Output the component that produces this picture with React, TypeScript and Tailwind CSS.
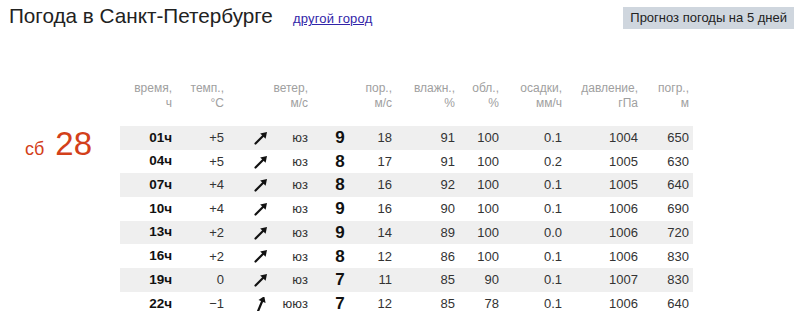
const columns = [
  { w: "w-[52px]", head: ["время,", "ч"] },
  { w: "w-[52px]", head: ["темп.,", "°C"] },
  { w: "w-[46px]", head: ["", ""] },
  { w: "w-[38px]", head: ["ветер,", "м/с"] },
  { w: "w-[64px]", head: ["", ""] },
  { w: "w-[20px]", head: ["пор.,", "м/с"] },
  { w: "w-[63px]", head: ["влажн.,", "%"] },
  { w: "w-[44px]", head: ["обл.,", "%"] },
  { w: "w-[63px]", head: ["осадки,", "мм/ч"] },
  { w: "w-[76px]", head: ["давление,", "гПа"] },
  { w: "w-[51px]", head: ["погр.,", "м"] },
];

const rows = [
  { time: "01ч", temp: "+5", dir: "юз", rot: 0, speed: "9", gust: "18", hum: "91", cloud: "100", rain: "0.1", press: "1004", err: "650" },
  { time: "04ч", temp: "+5", dir: "юз", rot: 0, speed: "8", gust: "17", hum: "91", cloud: "100", rain: "0.2", press: "1005", err: "630" },
  { time: "07ч", temp: "+4", dir: "юз", rot: 0, speed: "8", gust: "16", hum: "92", cloud: "100", rain: "0.1", press: "1005", err: "640" },
  { time: "10ч", temp: "+4", dir: "юз", rot: 0, speed: "9", gust: "16", hum: "90", cloud: "100", rain: "0.1", press: "1006", err: "690" },
  { time: "13ч", temp: "+2", dir: "юз", rot: 0, speed: "9", gust: "14", hum: "89", cloud: "100", rain: "0.0", press: "1006", err: "720" },
  { time: "16ч", temp: "+2", dir: "юз", rot: 0, speed: "8", gust: "12", hum: "86", cloud: "100", rain: "0.1", press: "1006", err: "830" },
  { time: "19ч", temp: "0", dir: "юз", rot: 0, speed: "7", gust: "11", hum: "85", cloud: "90", rain: "0.1", press: "1007", err: "830" },
  { time: "22ч", temp: "−1", dir: "ююз", rot: -22.5, speed: "7", gust: "12", hum: "85", cloud: "78", rain: "0.1", press: "1006", err: "640" },
];

function WindArrow({ rot }: { rot: number }) {
  return (
    <svg width="14" height="14" viewBox="0 0 14 14">
      <g transform={`rotate(${rot} 7 7)`}>
        <line x1="1.5" y1="12.5" x2="9.5" y2="4.5" stroke="#111" strokeWidth="2.2" strokeLinecap="round" />
        <polygon points="13,1 6.2,2.4 11.6,7.8" fill="#111" />
      </g>
    </svg>
  );
}

export default function App() {
  return (
    <div className="w-[800px] h-[316px] overflow-hidden bg-white font-['Liberation_Sans',Arial,sans-serif] text-[#333]">
      <div className="flex items-start h-[32px] pt-[4px] pl-[9px] pr-[6px]">
        <div className="flex items-baseline">
          <h1 className="text-[20.7px] leading-[24px] text-[#222]">Погода в Санкт-Петербурге</h1>
          <a href="#" className="ml-[20px] text-[13px] tracking-[0.2px] text-[#3124a8] underline">
            другой город
          </a>
        </div>
        <div className="ml-auto mt-[3px] bg-[#cfd6de] px-[7px] text-[13px] leading-[22px] text-[#222]">
          Прогноз погоды на 5 дней
        </div>
      </div>

      <div className="mt-[49px] flex">
        <div className="w-[120px] shrink-0" />
        <div className="flex text-[12px] leading-[15px] text-[#a0a0a0]">
          {columns.map((c, i) => (
            <div key={i} className={`${c.w} flex flex-col items-end whitespace-nowrap`}>
              <span>{c.head[0]}</span>
              <span>{c.head[1]}</span>
            </div>
          ))}
        </div>
      </div>

      <div className="mt-[15px] flex">
        <div className="w-[120px] shrink-0 pl-[25px] pt-[1px] flex items-baseline gap-[11px] text-[#d3401a] leading-none">
          <span className="text-[18px]">сб</span>
          <span className="text-[33px]">28</span>
        </div>
        <div className="w-[573px]">
          {rows.map((r, i) => (
            <div
              key={r.time}
              className={`flex items-center h-[23.7px] text-[13px] ${i % 2 === 0 ? "bg-[#efefef]" : "bg-white"}`}
            >
              <div className="w-[52px] text-right font-bold text-[13.5px] text-[#111]">{r.time}</div>
              <div className="w-[52px] text-right">{r.temp}</div>
              <div className="w-[46px] flex justify-end pr-[2px]">
                <WindArrow rot={r.rot} />
              </div>
              <div className="w-[38px] text-right">{r.dir}</div>
              <div className="w-[64px] text-center text-[17px] font-bold text-[#111]">{r.speed}</div>
              <div className="w-[20px] text-right">{r.gust}</div>
              <div className="w-[63px] text-right">{r.hum}</div>
              <div className="w-[44px] text-right">{r.cloud}</div>
              <div className="w-[63px] text-right">{r.rain}</div>
              <div className="w-[76px] text-right">{r.press}</div>
              <div className="w-[51px] text-right">{r.err}</div>
            </div>
          ))}
        </div>
      </div>
    </div>
  );
}
